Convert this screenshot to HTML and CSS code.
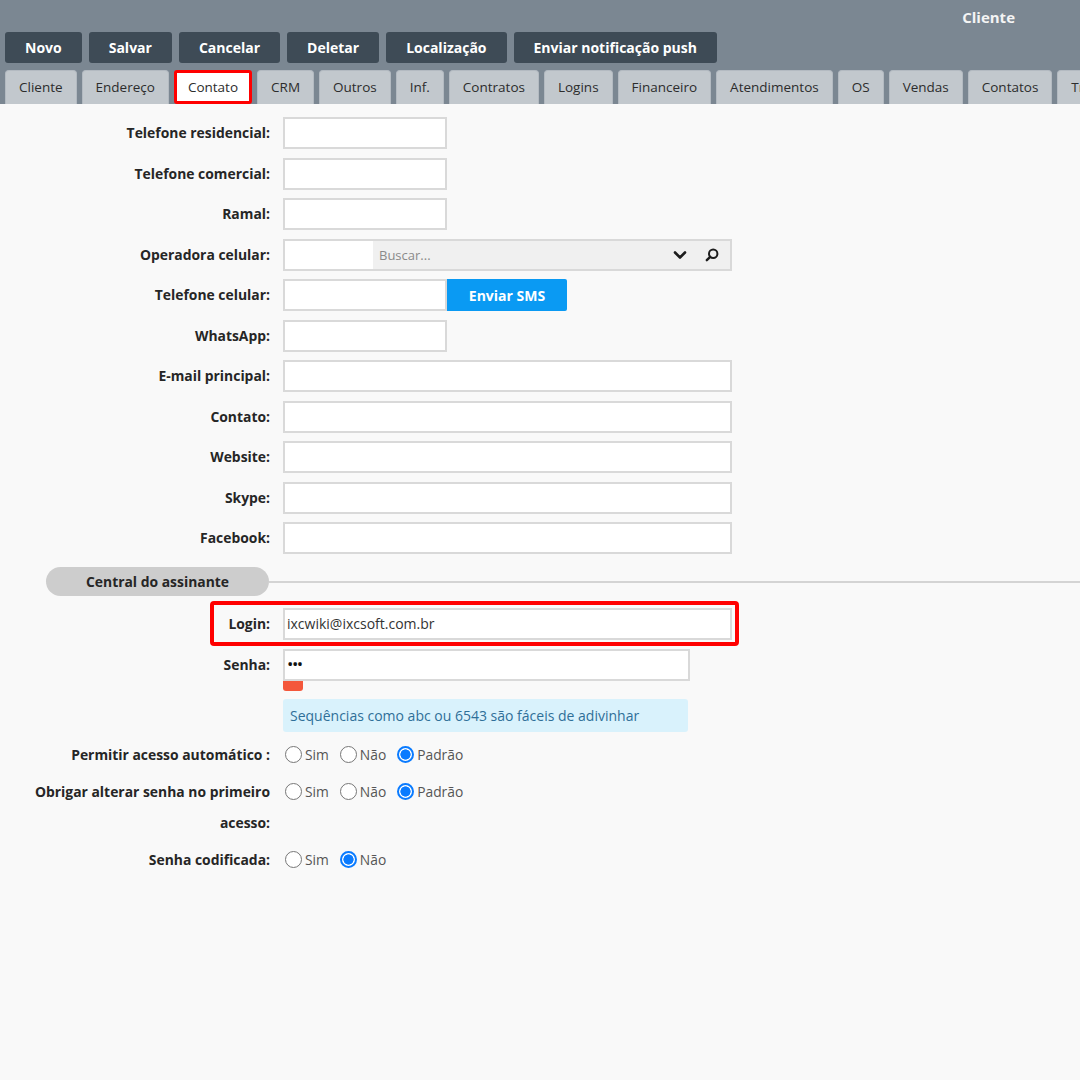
FILE: index.html
```
<!DOCTYPE html>
<html lang="pt-BR">
<head>
<meta charset="utf-8">
<title>Cliente</title>
<link rel="stylesheet" href="styles.css">
</head>
<body>
<header class="topbar">
  <div class="title-row"><span class="title">Cliente</span></div>
  <div class="btn-row">
    <button class="btn">Novo</button>
    <button class="btn">Salvar</button>
    <button class="btn">Cancelar</button>
    <button class="btn">Deletar</button>
    <button class="btn">Localização</button>
    <button class="btn">Enviar notificação push</button>
  </div>
  <nav class="tabs">
    <span class="tab">Cliente</span>
    <span class="tab">Endereço</span>
    <span class="tab active">Contato</span>
    <span class="tab">CRM</span>
    <span class="tab">Outros</span>
    <span class="tab">Inf.</span>
    <span class="tab">Contratos</span>
    <span class="tab">Logins</span>
    <span class="tab">Financeiro</span>
    <span class="tab">Atendimentos</span>
    <span class="tab">OS</span>
    <span class="tab">Vendas</span>
    <span class="tab">Contatos</span>
    <span class="tab">Tr</span>
  </nav>
</header>

<main class="content">
  <div class="row"><label class="lbl">Telefone residencial:</label><div class="inp sm"></div></div>
  <div class="row"><label class="lbl">Telefone comercial:</label><div class="inp sm"></div></div>
  <div class="row"><label class="lbl">Ramal:</label><div class="inp sm"></div></div>
  <div class="row"><label class="lbl">Operadora celular:</label>
    <div class="inp lg select">
      <div class="sel-id"></div>
      <div class="sel-search">
        <span class="placeholder">Buscar...</span>
        <svg class="ico chev" width="14" height="10" viewBox="0 0 14 10"><path d="M2 2.5 L7 7.5 L12 2.5" fill="none" stroke="#1d1d1d" stroke-width="2.6" stroke-linecap="round" stroke-linejoin="round"/></svg>
        <svg class="ico search" width="14" height="14" viewBox="0 0 14 14"><circle cx="8.2" cy="5.8" r="4.2" fill="none" stroke="#1d1d1d" stroke-width="2"/><path d="M5.2 8.8 L1.8 12.2" stroke="#1d1d1d" stroke-width="2.4" stroke-linecap="round"/></svg>
      </div>
    </div>
  </div>
  <div class="row"><label class="lbl">Telefone celular:</label><div class="inp sm"></div><button class="sms">Enviar SMS</button></div>
  <div class="row"><label class="lbl">WhatsApp:</label><div class="inp sm"></div></div>
  <div class="row"><label class="lbl">E-mail principal:</label><div class="inp lg"></div></div>
  <div class="row"><label class="lbl">Contato:</label><div class="inp lg"></div></div>
  <div class="row"><label class="lbl">Website:</label><div class="inp lg"></div></div>
  <div class="row"><label class="lbl">Skype:</label><div class="inp lg"></div></div>
  <div class="row"><label class="lbl">Facebook:</label><div class="inp lg"></div></div>

  <div class="section"><span class="pill">Central do assinante</span><span class="rule"></span></div>

  <div class="row login"><label class="lbl">Login:</label><div class="inp lg val">ixcwiki@ixcsoft.com.br</div></div>
  <div class="row pw-row"><label class="lbl">Senha:</label>
    <div class="pw">
      <div class="inp md val dots">•••</div>
      <div class="strength"></div>
      <div class="hint">Sequências como abc ou 6543 são fáceis de adivinhar</div>
    </div>
  </div>

  <div class="row radio-row"><label class="lbl lbl-r">Permitir acesso automático :</label>
    <div class="radios">
      <span class="opt"><span class="rd"></span>Sim</span>
      <span class="opt"><span class="rd"></span>Não</span>
      <span class="opt"><span class="rd on"></span>Padrão</span>
    </div>
  </div>
  <div class="row radio-row"><label class="lbl lbl-r">Obrigar alterar senha no primeiro acesso:</label>
    <div class="radios">
      <span class="opt"><span class="rd"></span>Sim</span>
      <span class="opt"><span class="rd"></span>Não</span>
      <span class="opt"><span class="rd on"></span>Padrão</span>
    </div>
  </div>
  <div class="row radio-row"><label class="lbl lbl-r">Senha codificada:</label>
    <div class="radios">
      <span class="opt"><span class="rd"></span>Sim</span>
      <span class="opt"><span class="rd on"></span>Não</span>
    </div>
  </div>
</main>
</body>
</html>
```
FILE: styles.css
```
*, *::before, *::after { box-sizing: border-box; }
html, body { margin: 0; padding: 0; }
body {
  width: 1080px;
  height: 1080px;
  overflow: hidden;
  background: #f9f9f9;
  font-family: "Open Sans", "Noto Sans", sans-serif;
  font-size: 13px;
  color: #2a2a2a;
}

/* header */
.topbar {
  background: #7b8792;
  padding: 0 0 0 5px;
  height: 104px;
  overflow: hidden;
}
.title-row {
  height: 32px;
  padding-top: 6px;
  line-height: 22px;
  text-align: right;
  padding-right: 65px;
}
.title {
  color: #f4f4f4;
  font-weight: 700;
  font-size: 15px;
}
.btn-row {
  display: flex;
  gap: 7px;
  height: 31px;
  margin-bottom: 7px;
}
.btn {
  background: #3e4b56;
  color: #fff;
  border: 0;
  border-radius: 3px;
  font-family: inherit;
  font-weight: 700;
  font-size: 14px;
  padding: 0 20px;
  height: 31px;
}
.tabs {
  display: flex;
  gap: 5px;
  height: 34px;
  white-space: nowrap;
}
.tab {
  flex-shrink: 0;
  background: #c2c8cd;
  border: 1px solid #b3bac1;
  border-bottom: 0;
  border-radius: 4px 4px 0 0;
  padding: 0 13px;
  line-height: 33px;
  font-size: 13.5px;
  color: #2c2c2c;
}
.tab.active {
  background: #fff;
  border: 3px solid #ff0000;
  border-radius: 3px;
  padding: 0 11px;
  line-height: 28px;
}

/* form */
.content { padding-top: 13px; }
.row {
  display: flex;
  align-items: flex-start;
  margin-bottom: 8.5px;
}
.lbl {
  width: 270px;
  flex-shrink: 0;
  padding-left: 20px;
  margin-right: 13px;
  text-align: right;
  font-weight: 700;
  font-size: 13.9px;
  line-height: 31px;
  color: #262626;
}
.inp {
  height: 32px;
  background: #fff;
  border: 2px solid #d9d9d9;
}
.inp.sm { width: 164px; }
.inp.md { width: 407px; }
.inp.lg { width: 449px; }
.inp.val {
  padding-left: 2px;
  line-height: 28px;
  font-size: 14px;
  color: #333;
}
.inp.dots { font-size: 17px; letter-spacing: -1.5px; color: #111; line-height: 26px; }

.select { display: flex; }
.sel-id { width: 88px; background: #fff; }
.sel-search {
  flex: 1;
  background: #f0f0f0;
  display: flex;
  align-items: center;
  padding-left: 6px;
}
.placeholder { color: #8a8a8a; flex: 1; }
.ico { display: block; }
.chev { margin-right: 18px; }
.search { margin-right: 11px; }

.sms {
  width: 120px;
  height: 32px;
  border: 0;
  background: #0a9af3;
  color: #fff;
  font-family: inherit;
  font-weight: 700;
  font-size: 14px;
  border-radius: 0 2px 2px 0;
}

.section {
  display: flex;
  align-items: center;
  margin-top: 13px;
  margin-bottom: 12px;
}
.pill {
  margin-left: 46px;
  width: 223px;
  height: 29px;
  line-height: 29px;
  border-radius: 15px;
  background: #cdcdcd;
  font-weight: 700;
  font-size: 13.9px;
  text-align: center;
  color: #262626;
}
.rule {
  flex: 1;
  height: 2px;
  background: #d4d4d4;
}

.login { position: relative; }
.login::before {
  content: "";
  position: absolute;
  left: 210px;
  top: -7px;
  width: 529px;
  height: 45px;
  border: 4px solid #ff0000;
  border-radius: 4px;
  pointer-events: none;
}

.pw { display: flex; flex-direction: column; }
.strength {
  width: 20px;
  height: 10px;
  background: #f4573b;
  border-radius: 0 0 3px 3px;
}
.hint {
  margin-top: 8px;
  width: 405px;
  height: 33px;
  line-height: 33px;
  padding-left: 7px;
  background: #d9f2fc;
  border-radius: 3px;
  color: #2f6f98;
  font-size: 14px;
}

.pw-row { margin-bottom: 7px; }
.radio-row { margin-bottom: 6px; }
.lbl-r { line-height: 31px; }
.radios {
  display: flex;
  align-items: center;
  height: 31px;
  padding-left: 2px;
  color: #555;
  font-size: 13.8px;
}
.opt {
  display: flex;
  align-items: center;
  margin-right: 11px;
}
.rd {
  width: 17px;
  height: 17px;
  border-radius: 50%;
  border: 1px solid #777;
  background: #fff;
  margin-right: 3px;
}
.rd.on {
  border: 2px solid #0a7bff;
  background: radial-gradient(circle, #0a7bff 0 4.8px, #fff 5.4px);
}
```
